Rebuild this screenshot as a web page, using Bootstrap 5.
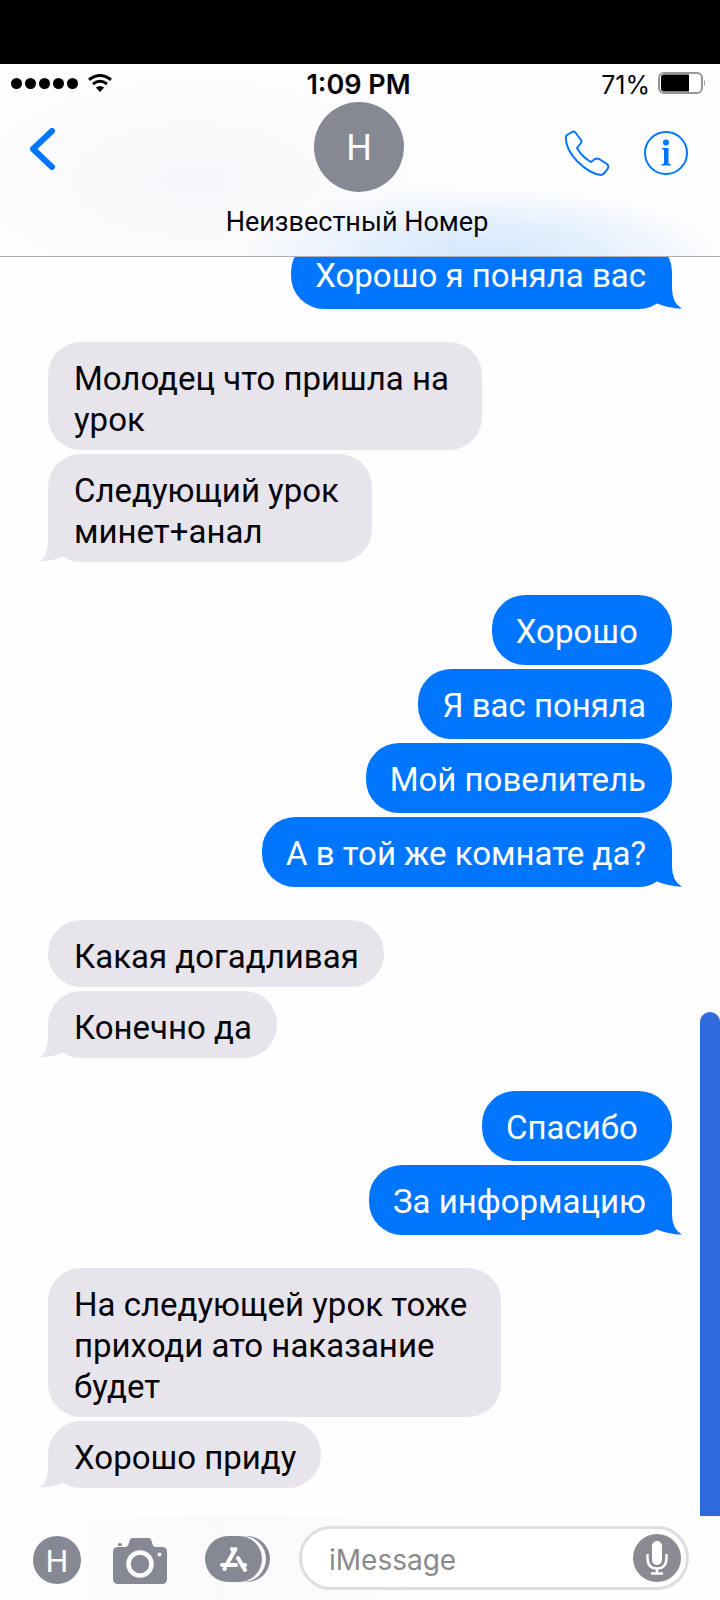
<!DOCTYPE html>
<html lang="ru">
<head>
<meta charset="utf-8">
<meta name="viewport" content="width=device-width, initial-scale=1">
<title>Сообщения</title>
<link href="https://cdn.jsdelivr.net/npm/bootstrap@5.3.0/dist/css/bootstrap.min.css" rel="stylesheet">
<style>
  :root { --ios-blue: #0076ff; --ios-gray: #868994; --bubble-gray: #e7e5eb; }
  body { background: #fefdff; color: #050409; font-family: Roboto, "Liberation Sans", sans-serif; font-size: 33px; line-height: 41px; }
  svg { display: block; flex: none; }
  .device-notch { height: 64px; background: #000; }
  .chat-header { border-bottom: 1px solid #b0adb3; padding-bottom: 16px;
    background: radial-gradient(240px 70px at 67% 100%, #d3e7fc, #e3effd 45%, transparent), radial-gradient(280px 130px at 27% 60%, #f7f6fa, transparent), #fefdff; }
  .status-row { height: 38px; padding: 0 14px 0 11px; font-family: Inter, sans-serif; font-size: 27px; line-height: 38px; }
  .status-row > div { flex: 1 1 0; }
  .status-row .clock, .status-row .charge { padding-top: 3px; }
  .signal-dots { gap: 3px; margin-right: 10px; }
  .signal-dots span { width: 11px; height: 11px; border-radius: 50%; background: #000; }
  .charge { font-size: 25px; }
  .nav-row { padding: 0 32px 0 30px; }
  .nav-row > div { flex: 1 1 0; }
  .nav-back { padding-top: 12px; }
  .nav-actions { gap: 34px; padding-top: 12px; }
  .plain-btn { background: none; border: 0; padding: 0; color: var(--ios-blue); }
  .avatar { width: 90px; height: 90px; background: var(--ios-gray); font-size: 36px; padding-top: 3px; }
  .contact-name { font-size: 27px; line-height: 36px; margin-top: 12px; font-weight: 400; padding-right: 6px; }
  .chat-log { padding: 0 48px 28px; gap: 33px; }
  .chat-group { gap: 4px; }
  .chat-group:first-child { margin-top: -18px; }
  .bubble { border-radius: 33px; max-width: 470px; }
  .bubble-in { background: var(--bubble-gray); padding: 16px 25px 10px 26px; }
  .bubble-out { background: var(--ios-blue); color: #fff; padding: 16px 26px 13px 24px; }
  .tail { position: absolute; bottom: 0; width: 26px; height: 34px; }
  .bubble-out .tail { right: -10px; fill: var(--ios-blue); }
  .bubble-in .tail { left: -8px; fill: var(--bubble-gray); }
  .scroll-thumb { position: absolute; right: 0; bottom: 0; width: 20px; height: 40%; background: #2f6bdc; border-radius: 10px 10px 0 0; }
  .composer { padding: 10px 31px 10px 33px; background: linear-gradient(90deg, #fefdff, #faf9fc 30%, #fbfafd 45%, #fefdff 60%); }
  .composer .plain-btn { color: var(--ios-gray); }
  .mini-avatar { flex: none; width: 48px; height: 48px; margin-top: 4px; background: var(--ios-gray); font-size: 32px; line-height: 50px; }
  .camera-btn { margin: 6px 0 0 32px; }
  .apps-btn { margin: 2px 0 0 38px; }
  .field-wrap { margin-left: 28px; }
  .message-field { height: 64px; border: 3px solid #dedde1; border-radius: 32px; background: #fff; font-family: Inter, sans-serif; font-size: 28px; padding: 4px 60px 0 27px; }
  .message-field::placeholder { color: #8a8a8c; opacity: 1; }
  .mic-btn { position: absolute; right: 8px; top: 8px; }
</style>
</head>
<body class="d-flex flex-column min-vh-100">
<div class="device-notch"></div>
<header class="chat-header">
  <div class="status-row d-flex align-items-center">
    <div class="d-flex align-items-center">
      <div class="signal-dots d-flex"><span></span><span></span><span></span><span></span><span></span></div>
      <svg width="24" height="18" viewBox="0 0 24 18" fill="none" stroke="#000" stroke-width="3"><path d="M1 5.8Q12-2.8 23 5.8M5 10Q12 4.6 19 10"/><path d="M12 18 7.8 13.6Q12 10.6 16.2 13.6Z" fill="#000" stroke="none"/></svg>
    </div>
    <div class="clock text-center fw-semibold text-nowrap">1:09 PM</div>
    <div class="d-flex align-items-center justify-content-end gap-2">
      <span class="charge">71%</span>
      <svg width="48" height="22" viewBox="0 0 48 22"><rect x="1" y="1" width="43" height="20" rx="5" fill="#fff" stroke="#97959a" stroke-width="2"/><path d="M6 2.500H31V19.500H6Q3 19.500 3 16.500V5.500Q3 2.500 6 2.500Z"/><path d="M46 7Q48 11 46 15Z" fill="#97959a"/></svg>
    </div>
  </div>
  <div class="nav-row d-flex align-items-center">
    <div class="nav-back"><button class="plain-btn" type="button" aria-label="Назад"><svg width="28" height="42" viewBox="0 0 28 42" fill="none" stroke="currentColor" stroke-width="6" stroke-linecap="round" stroke-linejoin="round"><path d="M22 3 3 21 22 39"/></svg></button></div>
    <span class="avatar rounded-circle text-white d-flex align-items-center justify-content-center">Н</span>
    <div class="nav-actions d-flex justify-content-end">
      <button class="plain-btn" type="button" aria-label="Позвонить"><svg width="46" height="46" viewBox="0 0 46 46" fill="none" stroke="currentColor" stroke-width="2" stroke-linejoin="round"><path d="M2 7Q1 18 13 31Q26 44 37 45Q40 45 44 38Q45 36 43 34L35 29Q33 28 31 29L27 32Q18 27 13 18L17 13Q18 12 17 10L11 2Q10 1 8 2L3 5Q2 6 2 7Z"/></svg></button>
      <button class="plain-btn" type="button" aria-label="Сведения"><svg width="44" height="44" viewBox="0 0 44 44"><circle cx="22" cy="22" r="21" fill="none" stroke="currentColor" stroke-width="2"/><circle cx="22" cy="11.500" r="3" fill="currentColor"/><path d="M18 17H24.500V32.500L27 33.500V34.500H17.500V33.500L20 32.500V18.700L18 18.200Z" fill="currentColor"/></svg></button>
    </div>
  </div>
  <h1 class="contact-name text-center mb-0">Неизвестный Номер</h1>
</header>

<main class="position-relative overflow-hidden">
  <div class="chat-log d-flex flex-column">
    <div class="chat-group d-flex flex-column align-items-end">
      <div class="bubble bubble-out position-relative">Хорошо я поняла вас<svg class="tail" viewBox="0 0 26 34"><path d="M1 28.500Q12 33 26 33.800Q16 28 16 13V0H1Z"/></svg></div>
    </div>
    <div class="chat-group d-flex flex-column align-items-start">
      <div class="bubble bubble-in">Молодец что пришла на&nbsp;<br>урок</div>
      <div class="bubble bubble-in position-relative">Следующий урок&nbsp;<br>минет+анал<svg class="tail" viewBox="0 0 26 34"><path d="M22 29Q12 33 0 33.500Q8 28 8 13V0H22Z"/></svg></div>
    </div>
    <div class="chat-group d-flex flex-column align-items-end">
      <div class="bubble bubble-out">Хорошо&nbsp;</div>
      <div class="bubble bubble-out">Я вас поняла</div>
      <div class="bubble bubble-out">Мой повелитель</div>
      <div class="bubble bubble-out position-relative">А в той же комнате да?<svg class="tail" viewBox="0 0 26 34"><path d="M1 28.500Q12 33 26 33.800Q16 28 16 13V0H1Z"/></svg></div>
    </div>
    <div class="chat-group d-flex flex-column align-items-start">
      <div class="bubble bubble-in">Какая догадливая</div>
      <div class="bubble bubble-in position-relative">Конечно да<svg class="tail" viewBox="0 0 26 34"><path d="M22 29Q12 33 0 33.500Q8 28 8 13V0H22Z"/></svg></div>
    </div>
    <div class="chat-group d-flex flex-column align-items-end">
      <div class="bubble bubble-out">Спасибо&nbsp;</div>
      <div class="bubble bubble-out position-relative">За информацию<svg class="tail" viewBox="0 0 26 34"><path d="M1 28.500Q12 33 26 33.800Q16 28 16 13V0H1Z"/></svg></div>
    </div>
    <div class="chat-group d-flex flex-column align-items-start">
      <div class="bubble bubble-in">На следующей урок тоже&nbsp;<br>приходи ато наказание<br>будет</div>
      <div class="bubble bubble-in position-relative">Хорошо приду<svg class="tail" viewBox="0 0 26 34"><path d="M22 29Q12 33 0 33.500Q8 28 8 13V0H22Z"/></svg></div>
    </div>
  </div>
  <div class="scroll-thumb"></div>
</main>

<footer class="composer d-flex align-items-center mt-auto">
  <span class="mini-avatar rounded-circle text-white text-center">Н</span>
  <button class="plain-btn camera-btn" type="button" aria-label="Камера"><svg width="54" height="46" viewBox="0 0 54 46"><path fill="currentColor" d="M0 14Q0 9 5 9H12Q15 9 15.500 6L16.500 3Q17 0 20 0H35Q38 0 38.500 3L39.500 6Q40 9 43 9H49Q54 9 54 14V41Q54 46 49 46H5Q0 46 0 41ZM5 6Q5 5 7 5Q9 5 9 7V8H5Z"/><circle cx="27" cy="26" r="11.500" fill="none" stroke="#faf9fc" stroke-width="4.500"/><circle cx="46.500" cy="16.500" r="2" fill="#faf9fc"/></svg></button>
  <button class="plain-btn apps-btn" type="button" aria-label="Приложения"><svg width="66" height="48" viewBox="0 0 66 48"><rect x="8" y="1" width="57" height="46" rx="23" fill="currentColor"/><rect x="4" y="1" width="57" height="46" rx="23" fill="#faf9fc"/><rect x="0" y="1" width="57" height="46" rx="23" fill="currentColor"/><g fill="none" stroke="#fff" stroke-width="4" stroke-linecap="round"><path d="M30.500 14 22 29M27 14 29 17M33 23 40 35M17 30H31M37 30H40M19.500 34 20 33.500"/></g></svg></button>
  <div class="field-wrap position-relative flex-grow-1">
    <input class="message-field w-100 d-block" type="text" placeholder="iMessage" aria-label="iMessage">
    <button class="plain-btn mic-btn" type="button" aria-label="Диктовка"><svg width="48" height="48" viewBox="0 0 48 48"><circle cx="24" cy="24" r="24" fill="#8c8992"/><rect x="19" y="7" width="10" height="24" rx="5" fill="#fff"/><path d="M14.500 20V24Q14.500 34.500 24 34.500T33.500 24V20M24 34.500V39M18 39.500H30" fill="none" stroke="#fff" stroke-width="2.500"/></svg></button>
  </div>
</footer>
<script src="https://cdn.jsdelivr.net/npm/bootstrap@5.3.0/dist/js/bootstrap.bundle.min.js"></script>
</body>
</html>
